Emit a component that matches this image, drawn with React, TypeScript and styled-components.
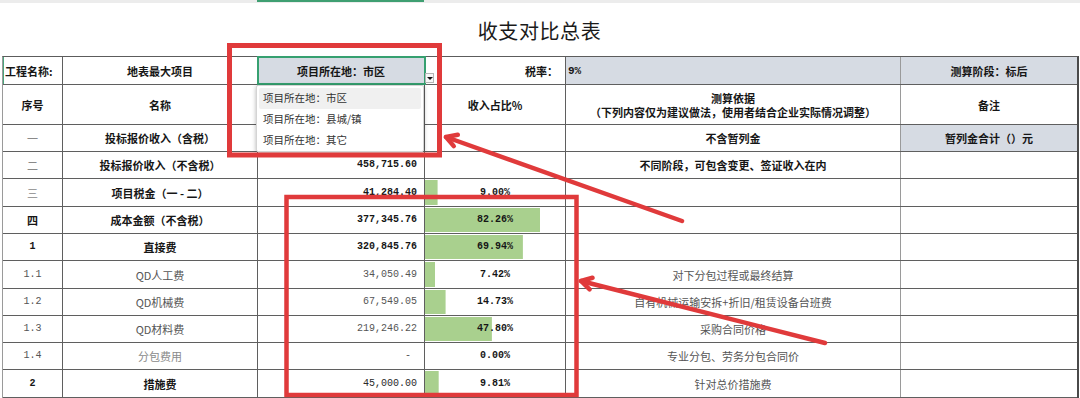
import styled, { createGlobalStyle } from "styled-components";

const CJK = `"Noto Sans CJK SC", "Noto Sans", sans-serif`;
const MONO = `"Liberation Mono", "Noto Sans CJK SC", monospace`;
const COLS = "60px 195px 167px 141px 335px 176px";

const GlobalStyle = createGlobalStyle`
  html, body {
    margin: 0;
    padding: 0;
    background: #fff;
  }
  body {
    font-family: ${CJK};
  }
  * {
    box-sizing: border-box;
  }
`;

const Page = styled.div`
  position: relative;
  width: 1080px;
  height: 398px;
  overflow: hidden;
  background: #fff;
`;

const ColumnStrip = styled.div`
  display: grid;
  grid-template-columns: 257px 167px 1fr;
  height: 3px;
  background: #ececec;
`;

const StripMark = styled.div`
  grid-column: 2;
  border-top: 2px solid #3f9f72;
`;

const Title = styled.h1`
  margin: 0;
  width: 1079px;
  height: 53px;
  padding-top: 3px;
  display: flex;
  align-items: center;
  justify-content: center;
  font: 400 20px/1 ${CJK};
  letter-spacing: 0.6px;
  color: #1a1a1a;
`;

const Sheet = styled.div`
  margin-left: 2px;
  width: 1077px;
  border-left: 1px solid #9a9a9a;
  border-top: 1px solid #5c5c5c;
  border-right: 2px solid #4a4a4a;
`;

const Row = styled.div<{ $h: number }>`
  display: grid;
  grid-template-columns: ${COLS};
  height: ${(p) => p.$h}px;
  border-bottom: 1px solid #5f5f5f;
`;

type Align = "left" | "center" | "right";
type Tone = "strong" | "plain" | "muted" | "faint";

const toneColor: Record<Tone, string> = {
  strong: "#161616",
  plain: "#2a2a2a",
  muted: "#555",
  faint: "#8a8a8a",
};

const Cell = styled.div<{
  $align?: Align;
  $bold?: boolean;
  $tone?: Tone;
  $shade?: boolean;
  $mono?: boolean;
  $accent?: boolean;
}>`
  position: relative;
  display: flex;
  align-items: center;
  justify-content: ${(p) =>
    p.$align === "left" ? "flex-start" : p.$align === "right" ? "flex-end" : "center"};
  padding: 0 7px;
  border-right: 1px solid #5f5f5f;
  background: ${(p) => (p.$shade ? "#d6dbe3" : "transparent")};
  color: ${(p) => toneColor[p.$tone ?? "strong"]};
  font-family: ${(p) => (p.$mono ? MONO : CJK)};
  font-size: ${(p) => (p.$mono ? "10px" : "11px")};
  font-weight: ${(p) => (p.$bold ? 700 : 400)};
  white-space: pre;
  line-height: 14px;
  text-align: center;
  box-shadow: ${(p) => (p.$accent ? "inset 1px 0 0 #4aa57c" : "none")};

  &:nth-child(5) {
    border-right-color: #9a9a9a;
  }
  &:last-child {
    border-right: none;
  }
`;

const LabelCell = styled(Cell)`
  padding-left: 2px;
`;

const RateCell = styled(Cell)`
  padding-left: 2px;
  font-size: 11px;
`;

const SelectedCell = styled(Cell)`
  outline: 2px solid #36a070;
  outline-offset: -1px;
  z-index: 2;
`;

const BarCell = styled(Cell)`
  background-image: linear-gradient(#a9d08e, #a9d08e);
  background-repeat: no-repeat;
  background-position: 0 center;
`;

const DropButton = styled.div`
  position: absolute;
  left: calc(100% + 1px);
  bottom: 1px;
  width: 9px;
  height: 10px;
  border: 1px solid #b5b5b5;
  background: #f7f7f7;
  display: flex;
  align-items: center;
  justify-content: center;

  &::after {
    content: "";
    border-left: 3px solid transparent;
    border-right: 3px solid transparent;
    border-top: 3px solid #111;
  }
`;

const Menu = styled.div`
  position: absolute;
  top: calc(100% + 1px);
  left: -2px;
  width: 168px;
  height: 67px;
  padding: 2px;
  background: #fff;
  border: 1px solid #d4d4d4;
  border-radius: 2px;
  box-shadow: 0 1px 4px rgba(0, 0, 0, 0.3);
  z-index: 3;
`;

const MenuItem = styled.div<{ $active?: boolean }>`
  display: flex;
  align-items: center;
  height: 21px;
  padding-left: 4px;
  border-radius: 2px;
  background: ${(p) => (p.$active ? "#f0f0f0" : "transparent")};
  font: 400 10.5px/1 ${CJK};
  color: #333;
  white-space: nowrap;
`;

const Annotations = styled.svg`
  position: absolute;
  inset: 0;
  pointer-events: none;
  z-index: 5;
`;

type Line = {
  seq: string;
  seqBold?: boolean;
  seqTone?: Tone;
  name: string;
  nameBold?: boolean;
  nameTone?: Tone;
  amount: string;
  amountBold?: boolean;
  amountTone?: Tone;
  pct: number | null;
  basis: string;
  basisBold?: boolean;
  remark?: string;
  h: number;
};

const lines: Line[] = [
  {
    seq: "一",
    seqTone: "faint",
    name: "投标报价收入（含税）",
    nameBold: true,
    amount: "",
    pct: null,
    basis: "不含暂列金",
    basisBold: true,
    remark: "暂列金合计（）元",
    h: 27,
  },
  {
    seq: "二",
    seqTone: "faint",
    name: "投标报价收入（不含税）",
    nameBold: true,
    amount: "458,715.60",
    amountBold: true,
    pct: null,
    basis: "不同阶段，可包含变更、签证收入在内",
    basisBold: true,
    h: 27,
  },
  {
    seq: "三",
    seqTone: "faint",
    name: "项目税金（一 - 二）",
    nameBold: true,
    amount: "41,284.40",
    amountBold: true,
    pct: 9.0,
    basis: "",
    h: 28,
  },
  {
    seq: "四",
    seqBold: true,
    name: "成本金额（不含税）",
    nameBold: true,
    amount: "377,345.76",
    amountBold: true,
    pct: 82.26,
    basis: "",
    h: 27,
  },
  {
    seq: "1",
    seqBold: true,
    name: "直接费",
    nameBold: true,
    amount: "320,845.76",
    amountBold: true,
    pct: 69.94,
    basis: "",
    h: 27,
  },
  {
    seq: "1.1",
    seqTone: "muted",
    name: "QD人工费",
    nameTone: "muted",
    amount: "34,050.49",
    amountTone: "muted",
    pct: 7.42,
    basis: "对下分包过程或最终结算",
    h: 28,
  },
  {
    seq: "1.2",
    seqTone: "muted",
    name: "QD机械费",
    nameTone: "muted",
    amount: "67,549.05",
    amountTone: "muted",
    pct: 14.73,
    basis: "自有机械运输安拆+折旧/租赁设备台班费",
    h: 27,
  },
  {
    seq: "1.3",
    seqTone: "muted",
    name: "QD材料费",
    nameTone: "muted",
    amount: "219,246.22",
    amountTone: "muted",
    pct: 47.8,
    basis: "采购合同价格",
    h: 27,
  },
  {
    seq: "1.4",
    seqTone: "muted",
    name: "分包费用",
    nameTone: "faint",
    amount: "- ",
    amountTone: "muted",
    pct: 0,
    basis: "专业分包、劳务分包合同价",
    h: 27,
  },
  {
    seq: "2",
    seqBold: true,
    name: "措施费",
    nameBold: true,
    amount: "45,000.00",
    amountTone: "plain",
    pct: 9.81,
    basis: "针对总价措施费",
    h: 28,
  },
];

const isAscii = (s: string) => /^[\x00-\x7f]*$/.test(s);

function Arrow({ from, to }: { from: [number, number]; to: [number, number] }) {
  const ang = Math.atan2(from[1] - to[1], from[0] - to[0]);
  const arm = 12;
  const a1 = ang - Math.PI / 6;
  const a2 = ang + Math.PI / 6;
  const p1 = [to[0] + arm * Math.cos(a1), to[1] + arm * Math.sin(a1)];
  const p2 = [to[0] + arm * Math.cos(a2), to[1] + arm * Math.sin(a2)];
  return (
    <g stroke="#e03a3b" strokeWidth={4.5} strokeLinecap="round" fill="none">
      <line x1={from[0]} y1={from[1]} x2={to[0]} y2={to[1]} />
      <polyline points={`${p1[0]},${p1[1]} ${to[0]},${to[1]} ${p2[0]},${p2[1]}`} strokeLinejoin="round" />
    </g>
  );
}

export default function App() {
  return (
    <Page>
      <GlobalStyle />
      <ColumnStrip>
        <StripMark />
      </ColumnStrip>
      <Title>收支对比总表</Title>

      <Sheet>
        <Row $h={28}>
          <LabelCell $align="left" $bold $accent>
            工程名称:
          </LabelCell>
          <Cell $bold>地表最大项目</Cell>
          <SelectedCell $bold $shade>
            项目所在地：市区
            <DropButton />
            <Menu>
              <MenuItem $active>项目所在地：市区</MenuItem>
              <MenuItem>项目所在地：县城/镇</MenuItem>
              <MenuItem>项目所在地：其它</MenuItem>
            </Menu>
          </SelectedCell>
          <Cell $align="right" $bold>
            税率：
          </Cell>
          <RateCell $align="left" $bold $mono $shade>
            9%
          </RateCell>
          <Cell $bold $shade>
            测算阶段：标后
          </Cell>
        </Row>

        <Row $h={40}>
          <Cell $bold>序号</Cell>
          <Cell $bold>名称</Cell>
          <Cell />
          <Cell $bold>收入占比%</Cell>
          <Cell $bold>{"测算依据\n（下列内容仅为建议做法，使用者结合企业实际情况调整）"}</Cell>
          <Cell $bold>备注</Cell>
        </Row>

        {lines.map((l) => (
          <Row $h={l.h} key={l.seq}>
            <Cell $bold={l.seqBold} $tone={l.seqTone} $mono={isAscii(l.seq)}>
              {l.seq}
            </Cell>
            <Cell $bold={l.nameBold} $tone={l.nameTone}>
              {l.name}
            </Cell>
            <Cell $align="right" $mono $bold={l.amountBold} $tone={l.amountTone}>
              {l.amount}
            </Cell>
            {l.pct === null ? (
              <Cell />
            ) : (
              <BarCell
                $mono
                $bold
                style={{ backgroundSize: `${(l.pct * 1.4).toFixed(1)}px calc(100% - 2px)` }}
              >
                {l.pct.toFixed(2) + "%"}
              </BarCell>
            )}
            <Cell $bold={l.basisBold} $tone={l.basisBold ? "strong" : "muted"}>
              {l.basis}
            </Cell>
            <Cell $bold $shade={!!l.remark}>
              {l.remark ?? ""}
            </Cell>
          </Row>
        ))}
      </Sheet>

      <Annotations width={1080} height={398} viewBox="0 0 1080 398">
        <rect x={229.5} y={45.5} width={210} height={109.5} fill="none" stroke="#e03a3b" strokeWidth={5} />
        <rect x={286.5} y={197} width={290} height={198} fill="none" stroke="#e03a3b" strokeWidth={4.5} />
        <Arrow from={[682, 221]} to={[446, 137]} />
        <Arrow from={[825, 343]} to={[581, 281]} />
      </Annotations>
    </Page>
  );
}
